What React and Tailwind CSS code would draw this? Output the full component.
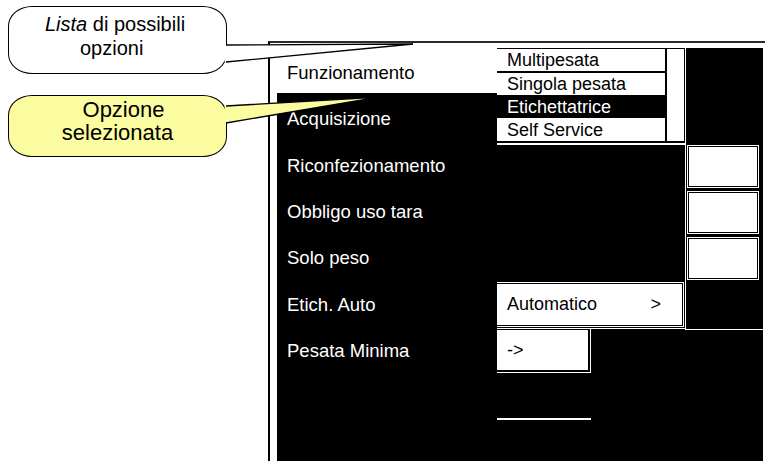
import React from "react";

const labels = [
  "Acquisizione",
  "Riconfezionamento",
  "Obbligo uso tara",
  "Solo peso",
  "Etich. Auto",
  "Pesata Minima",
];

const options = [
  { text: "Multipesata", cls: "h-[24px] border-b-2 border-black bg-white text-black" },
  { text: "Singola pesata", cls: "h-[22px] bg-white text-black" },
  { text: "Etichettatrice", cls: "h-[23px] bg-black text-white" },
  { text: "Self Service", cls: "h-[23px] bg-white text-black" },
];

const App = () => {
  return (
    <div className="relative flex h-[461px] w-[765px] overflow-hidden bg-white font-['Liberation_Sans',Arial,sans-serif] text-black">
      {/* callouts */}
      <div className="w-[268px] shrink-0 pl-[8px] pt-[6px]">
        <div className="h-[68px] w-[219px] rounded-[24px/20px] border-[1.5px] border-black bg-white pt-[5px] text-[20px] leading-[24px]">
          <div className="pl-[36px]">
            <i>Lista</i> di possibili
          </div>
          <div className="pl-[71px]">opzioni</div>
        </div>
        <div className="mt-[21px] h-[62px] w-[219px] rounded-[24px/20px] border-[1.5px] border-black bg-[#fbfb9f] pt-[2px] text-center text-[22px] leading-[23px]">
          <div className="pl-[12px]">Opzione</div>
          <div>selezionata</div>
        </div>
      </div>

      {/* setup panel */}
      <section className="relative mt-[41px] flex flex-1 border-l-2 border-t-2 border-l-black border-t-[#2a2a2a]">
        <div className="w-[7px] bg-white" />

        <div className="flex w-[220px] flex-col text-[18.5px]">
          <div className="flex h-[50px] items-center bg-white pl-[10px] pt-[10px]">
            Funzionamento
          </div>
          <div className="flex-1 bg-black pt-[3px] text-white">
            {labels.map((l) => (
              <div key={l} className="flex h-[46.4px] items-center pl-[10px]">
                {l}
              </div>
            ))}
          </div>
        </div>

        <div className="flex w-[266px] flex-col text-[18px]">
          <div className="h-[5px] bg-white" />
          <div className="flex flex-1 bg-black">
            <div className="flex w-[188px] flex-col">
              <div className="h-[95px]" />
              <div className="h-[2px] bg-white" />
              <div className="h-[137px]" />
              <div className="w-[187px] border-b border-r border-t border-white pb-[1px] pr-[1px] pt-[1px]">
                <div className="flex h-[41px] items-center justify-between bg-white pl-[10px] pr-[21px]">
                  <span>Automatico</span>
                  <span>&gt;</span>
                </div>
              </div>
              <div className="mt-[1px] h-[1px] bg-white" />
              <div className="w-[94px] border-b border-r border-white pb-[2px] pr-[2px] pt-[1px]">
                <div className="flex h-[40px] items-center bg-white pl-[10px]">
                  -&gt;
                </div>
              </div>
              <div className="mt-[45px] h-[2px] w-[94px] bg-white" />
            </div>
            <div className="h-[282px] w-[1px] bg-white" />
            <div className="flex flex-1 flex-col">
              <div className="ml-[3px] mt-[99px] flex flex-col gap-[7px]">
                <div className="h-[39px] w-[68px] bg-white outline-1 outline-offset-1 outline-white" />
                <div className="h-[39px] w-[68px] bg-white outline-1 outline-offset-1 outline-white" />
                <div className="h-[39px] w-[68px] bg-white outline-1 outline-offset-1 outline-white" />
              </div>
              <div className="mt-[51px] h-[1px] bg-white" />
            </div>
          </div>
        </div>

        <div className="w-[2px] bg-white" />

        {/* open option list */}
        <div className="absolute left-[227px] top-[6px] flex h-[92px] w-[188px] text-[18px] leading-none">
          <div className="flex w-[168px] flex-col">
            {options.map((o) => (
              <div key={o.text} className={`flex items-center pl-[10px] ${o.cls}`}>
                {o.text}
              </div>
            ))}
          </div>
          <div className="w-[2px] bg-black" />
          <div className="w-[17px] bg-white" />
          <div className="w-[1px] bg-black" />
        </div>
      </section>

      {/* callout pointers */}
      <svg className="pointer-events-none absolute inset-0" width="765" height="461">
        <polygon points="224.6,45 413,44 224.6,62" fill="#ffffff" />
        <polyline points="226,45 413,44 226,62" fill="none" stroke="#000" strokeWidth="1.3" />
        <polygon points="224.6,106 380,97 224.6,123" fill="#fbfb9f" />
        <polyline points="226,106 380,97 226,123" fill="none" stroke="#000" strokeWidth="1.3" />
      </svg>
    </div>
  );
};

export default App;
